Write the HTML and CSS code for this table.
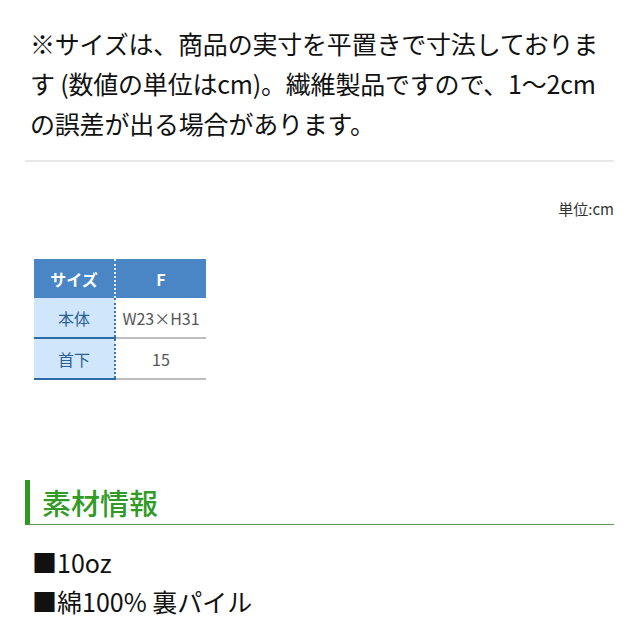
FILE: index.html
```html
<!DOCTYPE html>
<html lang="ja">
<head>
<meta charset="utf-8">
<link rel="stylesheet" href="styles.css">
</head>
<body>
<div class="page">
  <p class="note">※サイズは、商品の実寸を平置きで寸法しております (数値の単位はcm)。繊維製品ですので、1〜2cmの誤差が出る場合があります。</p>
  <div class="unit">単位:cm</div>
  <table class="size">
    <tr class="head"><th class="label">サイズ</th><th class="val">F</th></tr>
    <tr><td class="label">本体</td><td class="val">W23×H31</td></tr>
    <tr><td class="label">首下</td><td class="val">15</td></tr>
  </table>
  <h2 class="heading">素材情報</h2>
  <ul class="spec">
    <li>■10oz</li>
    <li>■綿100% 裏パイル</li>
  </ul>
</div>
</body>
</html>
```

FILE: styles.css
```css
html, body {
  margin: 0;
  padding: 0;
  background: #fff;
}
body {
  font-family: "Noto Sans CJK JP", "Noto Sans", sans-serif;
  color: #111;
}
.page {
  padding: 23px 26px 0 25px;
}
.note {
  margin: 0;
  padding: 0 0 17px 5px;
  font-size: 25px;
  line-height: 40px;
  letter-spacing: -0.2px;
  border-bottom: 2px solid #e8e8e8;
}
.unit {
  margin-top: 37px;
  text-align: right;
  font-size: 15px;
  line-height: 20px;
  color: #333;
}
.size {
  margin: 40px 0 0 9px;
  border-collapse: collapse;
  font-size: 16px;
}
.size th, .size td {
  padding: 0;
  text-align: center;
  height: 39px;
}
.size .label {
  width: 80px;
}
.size .val {
  width: 90px;
}
.head th {
  background: #4a86c6;
  color: #fff;
  font-weight: bold;
}
.head .label {
  border-right: 2px dotted #e8f0fa;
}
.size td.label {
  background: #cfe6fb;
  color: #2b5f95;
  border-right: 2px dotted #3a76b8;
  border-bottom: 2px solid #2e6aa6;
}
.size td.val {
  color: #555;
  border-bottom: 2px solid #bdbdbd;
}
.heading {
  margin: 100px 0 0 0;
  padding-left: 12px;
  border-left: 5px solid #2e9a22;
  border-bottom: 1px solid #5e9a55;
  font-size: 29px;
  line-height: 44px;
  font-weight: 500;
  color: #329b26;
}
.spec {
  list-style: none;
  margin: 18px 0 0 0;
  padding: 0 0 0 7px;
  font-size: 25px;
  line-height: 39px;
}
```
